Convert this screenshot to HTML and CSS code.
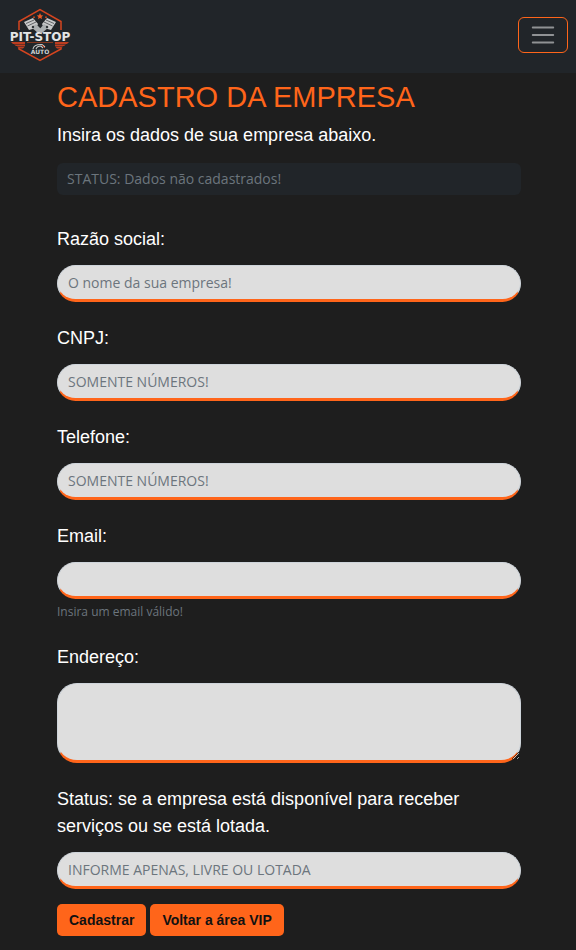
FILE: index.html
```html
<!DOCTYPE html>
<html lang="pt-BR">
<head>
<meta charset="utf-8">
<meta name="viewport" content="width=device-width, initial-scale=1">
<title>Cadastro da Empresa</title>
<link rel="stylesheet" href="styles.css">
</head>
<body>
<header class="navbar">
  <a class="brand" href="#" aria-label="Pit-Stop Auto">
    <svg class="logo" viewBox="0 0 64 54" width="64" height="54">
      <g fill="none" stroke="#d5451f" stroke-width="1.5">
        <path d="M11 22V13.500L32 1.500L53 13.500V22"/>
        <path d="M11 40V41L32 52.500L53 41V40"/>
      </g>
      <path d="M32 5l1 2.200 2.200.2-1.700 1.500.6 2.200-2.100-1.200-2.100 1.200.6-2.200-1.700-1.500 2.200-.2z" fill="#f05a24"/>
      <path d="M25 8.500h2v1.500h-2zM37 8.500h2v1.500h-2z" fill="#b8451f"/>
      <g>
        <path d="M16 14L25 10L30 16L28 20L21 22Z" fill="#c9cacb"/>
        <path d="M18 15.500L26 12M19.500 18L28 14" stroke="#45484b" stroke-width=".8"/>
        <path d="M23 19L28 16L35 23L30 25Z" fill="#aaaeb0"/>
        <circle cx="25" cy="19" r="1.200" fill="#303438"/>
      </g>
      <g transform="translate(64 0) scale(-1 1)">
        <path d="M16 14L25 10L30 16L28 20L21 22Z" fill="#c9cacb"/>
        <path d="M18 15.500L26 12M19.500 18L28 14" stroke="#45484b" stroke-width=".8"/>
        <path d="M23 19L28 16L34 23L30 25Z" fill="#aaaeb0"/>
        <circle cx="25" cy="19" r="1.200" fill="#303438"/>
      </g>
      <path d="M3 34H17V36H5ZM6 36.500H17V38H8ZM9 38.500H17L15 40.500H11ZM61 34H47V36H59ZM58 36.500H47V38H56ZM55 38.500H47L49 40.500H53Z" fill="#bd3d20"/>
      <path d="M19 34.500H45" stroke="#82361f"/>
      <text class="logo-name" x="32" y="33">PIT-STOP</text>
      <path d="M25 41Q26 36 34 36.500L37 39M28 41Q29 38 33 38L35 40" fill="none" stroke="#c5c7c8" stroke-width="1.100"/>
      <path d="M34 37L37 40" stroke="#d5451f"/>
      <text class="logo-sub" x="32" y="46">AUTO</text>
    </svg>
  </a>
  <button class="toggler" type="button" aria-label="Abrir menu">
    <svg viewBox="0 0 30 30" width="30" height="30"><path d="M4 7h22M4 15h22M4 23h22" stroke="#909294" stroke-width="2" stroke-linecap="round"/></svg>
  </button>
</header>
<main class="content">
  <h1>CADASTRO DA EMPRESA</h1>
  <p class="lead">Insira os dados de sua empresa abaixo.</p>
  <p class="status">STATUS: Dados não cadastrados!</p>
  <form>
    <div class="field"><label for="razao">Razão social:</label><input id="razao" type="text" placeholder="O nome da sua empresa!"></div>
    <div class="field"><label for="cnpj">CNPJ:</label><input id="cnpj" type="text" placeholder="SOMENTE NÚMEROS!"></div>
    <div class="field"><label for="telefone">Telefone:</label><input id="telefone" type="text" placeholder="SOMENTE NÚMEROS!"></div>
    <div class="field"><label for="email">Email:</label><input id="email" type="email" aria-describedby="ajuda"><small id="ajuda">Insira um email válido!</small></div>
    <div class="field"><label for="endereco">Endereço:</label><textarea id="endereco"></textarea></div>
    <div class="field"><label for="situacao">Status: se a empresa está disponível para receber serviços ou se está lotada.</label><input id="situacao" type="text" placeholder="INFORME APENAS, LIVRE OU LOTADA"></div>
    <div class="actions"><button type="submit">Cadastrar</button><button type="button">Voltar a área VIP</button></div>
  </form>
</main>
</body>
</html>
```
FILE: styles.css
```css
* { box-sizing: border-box; }
body {
  margin: 0;
  background: #1e1e1e;
  color: #fff;
  font-family: "Liberation Sans", Arial, sans-serif;
  font-size: 18px;
  line-height: 27px;
}
.navbar {
  display: flex;
  justify-content: space-between;
  align-items: center;
  padding: 8px 8px 11px;
  background: #212529;
}
.brand { display: flex; }
.logo { display: block; }
.logo-name {
  font-family: "DejaVu Sans", sans-serif;
  font-size: 12px;
  font-weight: bold;
  fill: #e4e5e6;
  text-anchor: middle;
}
.logo-sub {
  font-family: "DejaVu Sans", sans-serif;
  font-size: 6px;
  font-weight: bold;
  fill: #d0d2d3;
  text-anchor: middle;
}
.toggler {
  display: flex;
  justify-content: center;
  align-items: center;
  width: 50px;
  height: 36px;
  padding: 0;
  border: 1px solid #ff651a;
  border-radius: 6px;
  background: transparent;
}
.toggler svg { height: 28px; }
.content { padding: 6px 55px 14px 57px; }
h1 {
  margin: 0 0 7px;
  color: #ff651a;
  font-size: 29px;
  font-weight: normal;
  line-height: 36px;
}
.lead { margin: 0 0 14px; }
.status {
  margin: 0 0 31px;
  padding: 0 10px;
  border-radius: 6px;
  background: #212529;
  color: #6c757d;
  font-family: "Open Sans", "Noto Sans", sans-serif;
  font-size: 14px;
  line-height: 32px;
}
.field {
  display: flex;
  flex-direction: column;
  margin-bottom: 23px;
}
label { margin-bottom: 12px; }
input, textarea {
  width: 100%;
  height: 37px;
  padding: 0 10px;
  border: 1px solid #ced4da;
  border-bottom: 3px solid #ff651a;
  border-radius: 20px;
  background: #dedede;
  color: #212529;
  font-family: "Open Sans", "Noto Sans", sans-serif;
  font-size: 14px;
}
textarea { display: block; height: 80px; resize: vertical; }
::placeholder { color: #6c757d; opacity: 1; }
small {
  margin-top: 4px;
  color: #6c757d;
  font-family: "Open Sans", "Noto Sans", sans-serif;
  font-size: 12px;
  line-height: 18px;
}
.actions { display: flex; gap: 4px; margin-top: -8px; }
.actions button {
  height: 32px;
  padding: 0 12px;
  border: 0;
  border-radius: 5px;
  background: #ff651a;
  color: #111;
  font-family: inherit;
  font-size: 14px;
  font-weight: bold;
}
```
